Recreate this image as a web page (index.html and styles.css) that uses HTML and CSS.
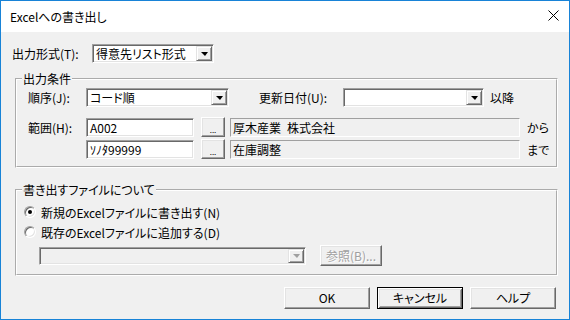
FILE: index.html
```html
<!DOCTYPE html>
<html lang="ja">
  <head>
    <meta charset="UTF-8" />
    <meta name="viewport" content="width=device-width, initial-scale=1" />

    <title>Excelへの書き出し</title>

    <link rel="stylesheet" href="styles.css">
  </head>

  <body>
    <div class="dialog">
      <div class="titleBar">
        <span class="titleText">Excelへの書き出し</span>
        <span class="closeBox">
          <svg width="11" height="11" viewBox="0 0 11 11">
            <path d="M0.5 0.5L10.5 10.5M10.5 0.5L0.5 10.5" stroke="#000" stroke-width="1" fill="none" />
          </svg>
        </span>
      </div>

      <div class="dialogBody">
        <!-- output format -->
        <div class="formatRow">
          <span class="formatLabel">出力形式(T):</span>
          <div class="combo formatCombo">
            <span class="comboText">得意先リスト形式</span>
            <span class="dropBtn"><i class="arrow"></i></span>
          </div>
        </div>

        <!-- conditions -->
        <fieldset class="group conditionGroup">
          <legend>出力条件</legend>
          <div class="groupInner">
            <div class="orderRow">
              <span class="fieldLabel">順序(J):</span>
              <div class="combo orderCombo">
                <span class="comboText">コード順</span>
                <span class="dropBtn"><i class="arrow"></i></span>
              </div>
              <span class="dateLabel">更新日付(U):</span>
              <div class="combo dateCombo">
                <span class="comboText"></span>
                <span class="dropBtn"><i class="arrow"></i></span>
              </div>
              <span class="suffix">以降</span>
            </div>

            <div class="rangeRow">
              <span class="fieldLabel">範囲(H):</span>
              <div class="textBox">A002</div>
              <button class="btn dotsBtn" type="button">...</button>
              <div class="staticBox">厚木産業&ensp;株式会社</div>
              <span class="suffix">から</span>
            </div>

            <div class="rangeRow secondRange">
              <span class="fieldLabel"></span>
              <div class="textBox">ｿﾉﾀ99999</div>
              <button class="btn dotsBtn" type="button">...</button>
              <div class="staticBox">在庫調整</div>
              <span class="suffix">まで</span>
            </div>
          </div>
        </fieldset>

        <!-- target file -->
        <fieldset class="group fileGroup">
          <legend>書き出すファイルについて</legend>
          <div class="groupInner">
            <div class="radioRow">
              <span class="radio checked"></span>
              <span class="radioText">新規のExcelファイルに書き出す(N)</span>
            </div>
            <div class="radioRow">
              <span class="radio"></span>
              <span class="radioText">既存のExcelファイルに追加する(D)</span>
            </div>
            <div class="fileRow">
              <div class="combo fileCombo disabled">
                <span class="comboText"></span>
                <span class="dropBtn"><i class="arrow"></i></span>
              </div>
              <button class="btn browseBtn disabled" type="button">参照(B)...</button>
            </div>
          </div>
        </fieldset>

        <div class="actions">
          <button class="btn actionBtn" type="button">OK</button>
          <button class="btn actionBtn defaultBtn" type="button">キャンセル</button>
          <button class="btn actionBtn" type="button">ヘルプ</button>
        </div>
      </div>
    </div>
  </body>
</html>
```

FILE: styles.css
```css
*,
*:before,
*:after {
  margin: 0;
  padding: 0;
  box-sizing: border-box;
}

body {
  font-family: "Noto Sans CJK JP", "Noto Sans", sans-serif;
  font-size: 12px;
  font-feature-settings: "palt";
  color: #000;
  background-color: #f0f0f0;
}

.dialog {
  width: 570px;
  height: 320px;
  border: 1px solid #1883d7;
  background-color: #f0f0f0;
}

/* title bar */
.titleBar {
  height: 31px;
  display: flex;
  align-items: center;
  justify-content: space-between;
  padding: 0 10px 0 9px;
  background-color: #fff;
}

.titleText {
  line-height: 14px;
}

.closeBox svg {
  display: block;
  margin-top: -2px;
}

.dialogBody {
  padding: 12px 13px 0 11px;
}

/* shared controls */
.combo {
  height: 19px;
  display: flex;
  align-items: stretch;
  background-color: #fff;
  border: 1px solid;
  border-color: #a0a0a0 #fff #fff #a0a0a0;
  box-shadow: inset 1px 1px 0 #696969, inset -1px -1px 0 #e3e3e3;
  padding: 1px;
}

.combo.disabled {
  background-color: #f0f0f0;
}

.comboText {
  flex: 1;
  padding-left: 2px;
  line-height: 15px;
  white-space: nowrap;
  overflow: hidden;
}

.dropBtn {
  width: 16px;
  display: flex;
  align-items: center;
  justify-content: center;
  background-color: #f0f0f0;
  border: 1px solid;
  border-color: #e3e3e3 #696969 #696969 #e3e3e3;
  box-shadow: inset 1px 1px 0 #fff, inset -1px -1px 0 #a0a0a0;
}

.arrow {
  width: 0;
  height: 0;
  border-top: 4px solid #000;
  border-left: 4px solid transparent;
  border-right: 3px solid transparent;
  margin-top: 1px;
}

.disabled .arrow {
  border-top-color: #a0a0a0;
}

.textBox {
  width: 108px;
  height: 19px;
  padding: 0 3px;
  line-height: 17px;
  background-color: #fff;
  border: 1px solid;
  border-color: #a0a0a0 #fff #fff #a0a0a0;
  box-shadow: inset 1px 1px 0 #696969, inset -1px -1px 0 #e3e3e3;
}

.staticBox {
  width: 290px;
  height: 19px;
  margin-left: 5px;
  padding: 0 2px;
  line-height: 17px;
  border: 1px solid;
  border-color: #a0a0a0 #fff #fff #a0a0a0;
}

.btn {
  font-family: "Noto Sans CJK JP", "Noto Sans", sans-serif;
  font-size: 12px;
  font-feature-settings: "palt";
  color: #000;
  background-color: #f0f0f0;
  border: 1px solid;
  border-color: #fff #696969 #696969 #fff;
  box-shadow: inset -1px -1px 0 #a0a0a0, inset 1px 1px 0 #e3e3e3;
  line-height: 14px;
}

.btn.disabled {
  color: #a0a0a0;
  text-shadow: 1px 1px 0 #fff;
}

/* output format row */
.formatRow {
  height: 19px;
  display: flex;
  align-items: center;
}

.formatLabel {
  width: 80px;
}

.formatCombo {
  width: 122px;
}

/* group boxes */
.group {
  width: 543px;
  margin-left: 3px;
  border: 2px groove #fff;
}

.group legend {
  margin-left: 5px;
  padding: 0 1px;
  line-height: 14px;
}

.conditionGroup {
  margin-top: 9px;
}

.conditionGroup .groupInner {
  padding: 2px 0 7px 11px;
}

.orderRow,
.rangeRow {
  display: flex;
  align-items: center;
}

.orderRow {
  height: 19px;
}

.rangeRow {
  height: 20px;
  margin-top: 10px;
}

.rangeRow.secondRange {
  margin-top: 2px;
}

.fieldLabel {
  width: 58px;
}

.orderCombo {
  width: 143px;
}

.dateLabel {
  width: 84px;
  margin-left: 30px;
}

.dateCombo {
  width: 141px;
}

.suffix {
  margin-left: 6px;
}

.rangeRow .suffix {
  margin-left: 7px;
}

.dotsBtn {
  width: 24px;
  height: 20px;
  margin-left: 7px;
  padding-top: 5px;
  font-size: 8px;
  line-height: 8px;
}

.fileGroup {
  margin-top: 15px;
}

.fileGroup .groupInner {
  padding: 7px 0 8px 7px;
}

.radioRow {
  height: 16px;
  display: flex;
  align-items: center;
}

.radioRow + .radioRow {
  margin-top: 4px;
}

.radio {
  width: 12px;
  height: 12px;
  display: flex;
  align-items: center;
  justify-content: center;
  border-radius: 50%;
  border: 1px solid;
  border-color: #a0a0a0 #fff #fff #a0a0a0;
  box-shadow: inset 1px 1px 0 #696969, inset -1px -1px 0 #e3e3e3;
  background-color: #fff;
}

.radio.checked:after {
  content: "";
  width: 4px;
  height: 4px;
  border-radius: 50%;
  background-color: #000;
}

.radioText {
  margin-left: 5px;
}

.fileRow {
  height: 21px;
  margin-top: 5px;
  display: flex;
  align-items: center;
}

.fileCombo {
  width: 267px;
  height: 18px;
  margin-left: 15px;
}

.browseBtn {
  width: 62px;
  height: 21px;
  margin-left: 14px;
}

/* bottom buttons */
.actions {
  margin-top: 11px;
  display: flex;
  justify-content: flex-end;
  gap: 7px;
}

.actionBtn {
  width: 86px;
  height: 22px;
}

.defaultBtn {
  border-color: #000;
  box-shadow: inset 1px 1px 0 #fff, inset -1px -1px 0 #696969, inset 2px 2px 0 #e3e3e3, inset -2px -2px 0 #a0a0a0;
}
```
